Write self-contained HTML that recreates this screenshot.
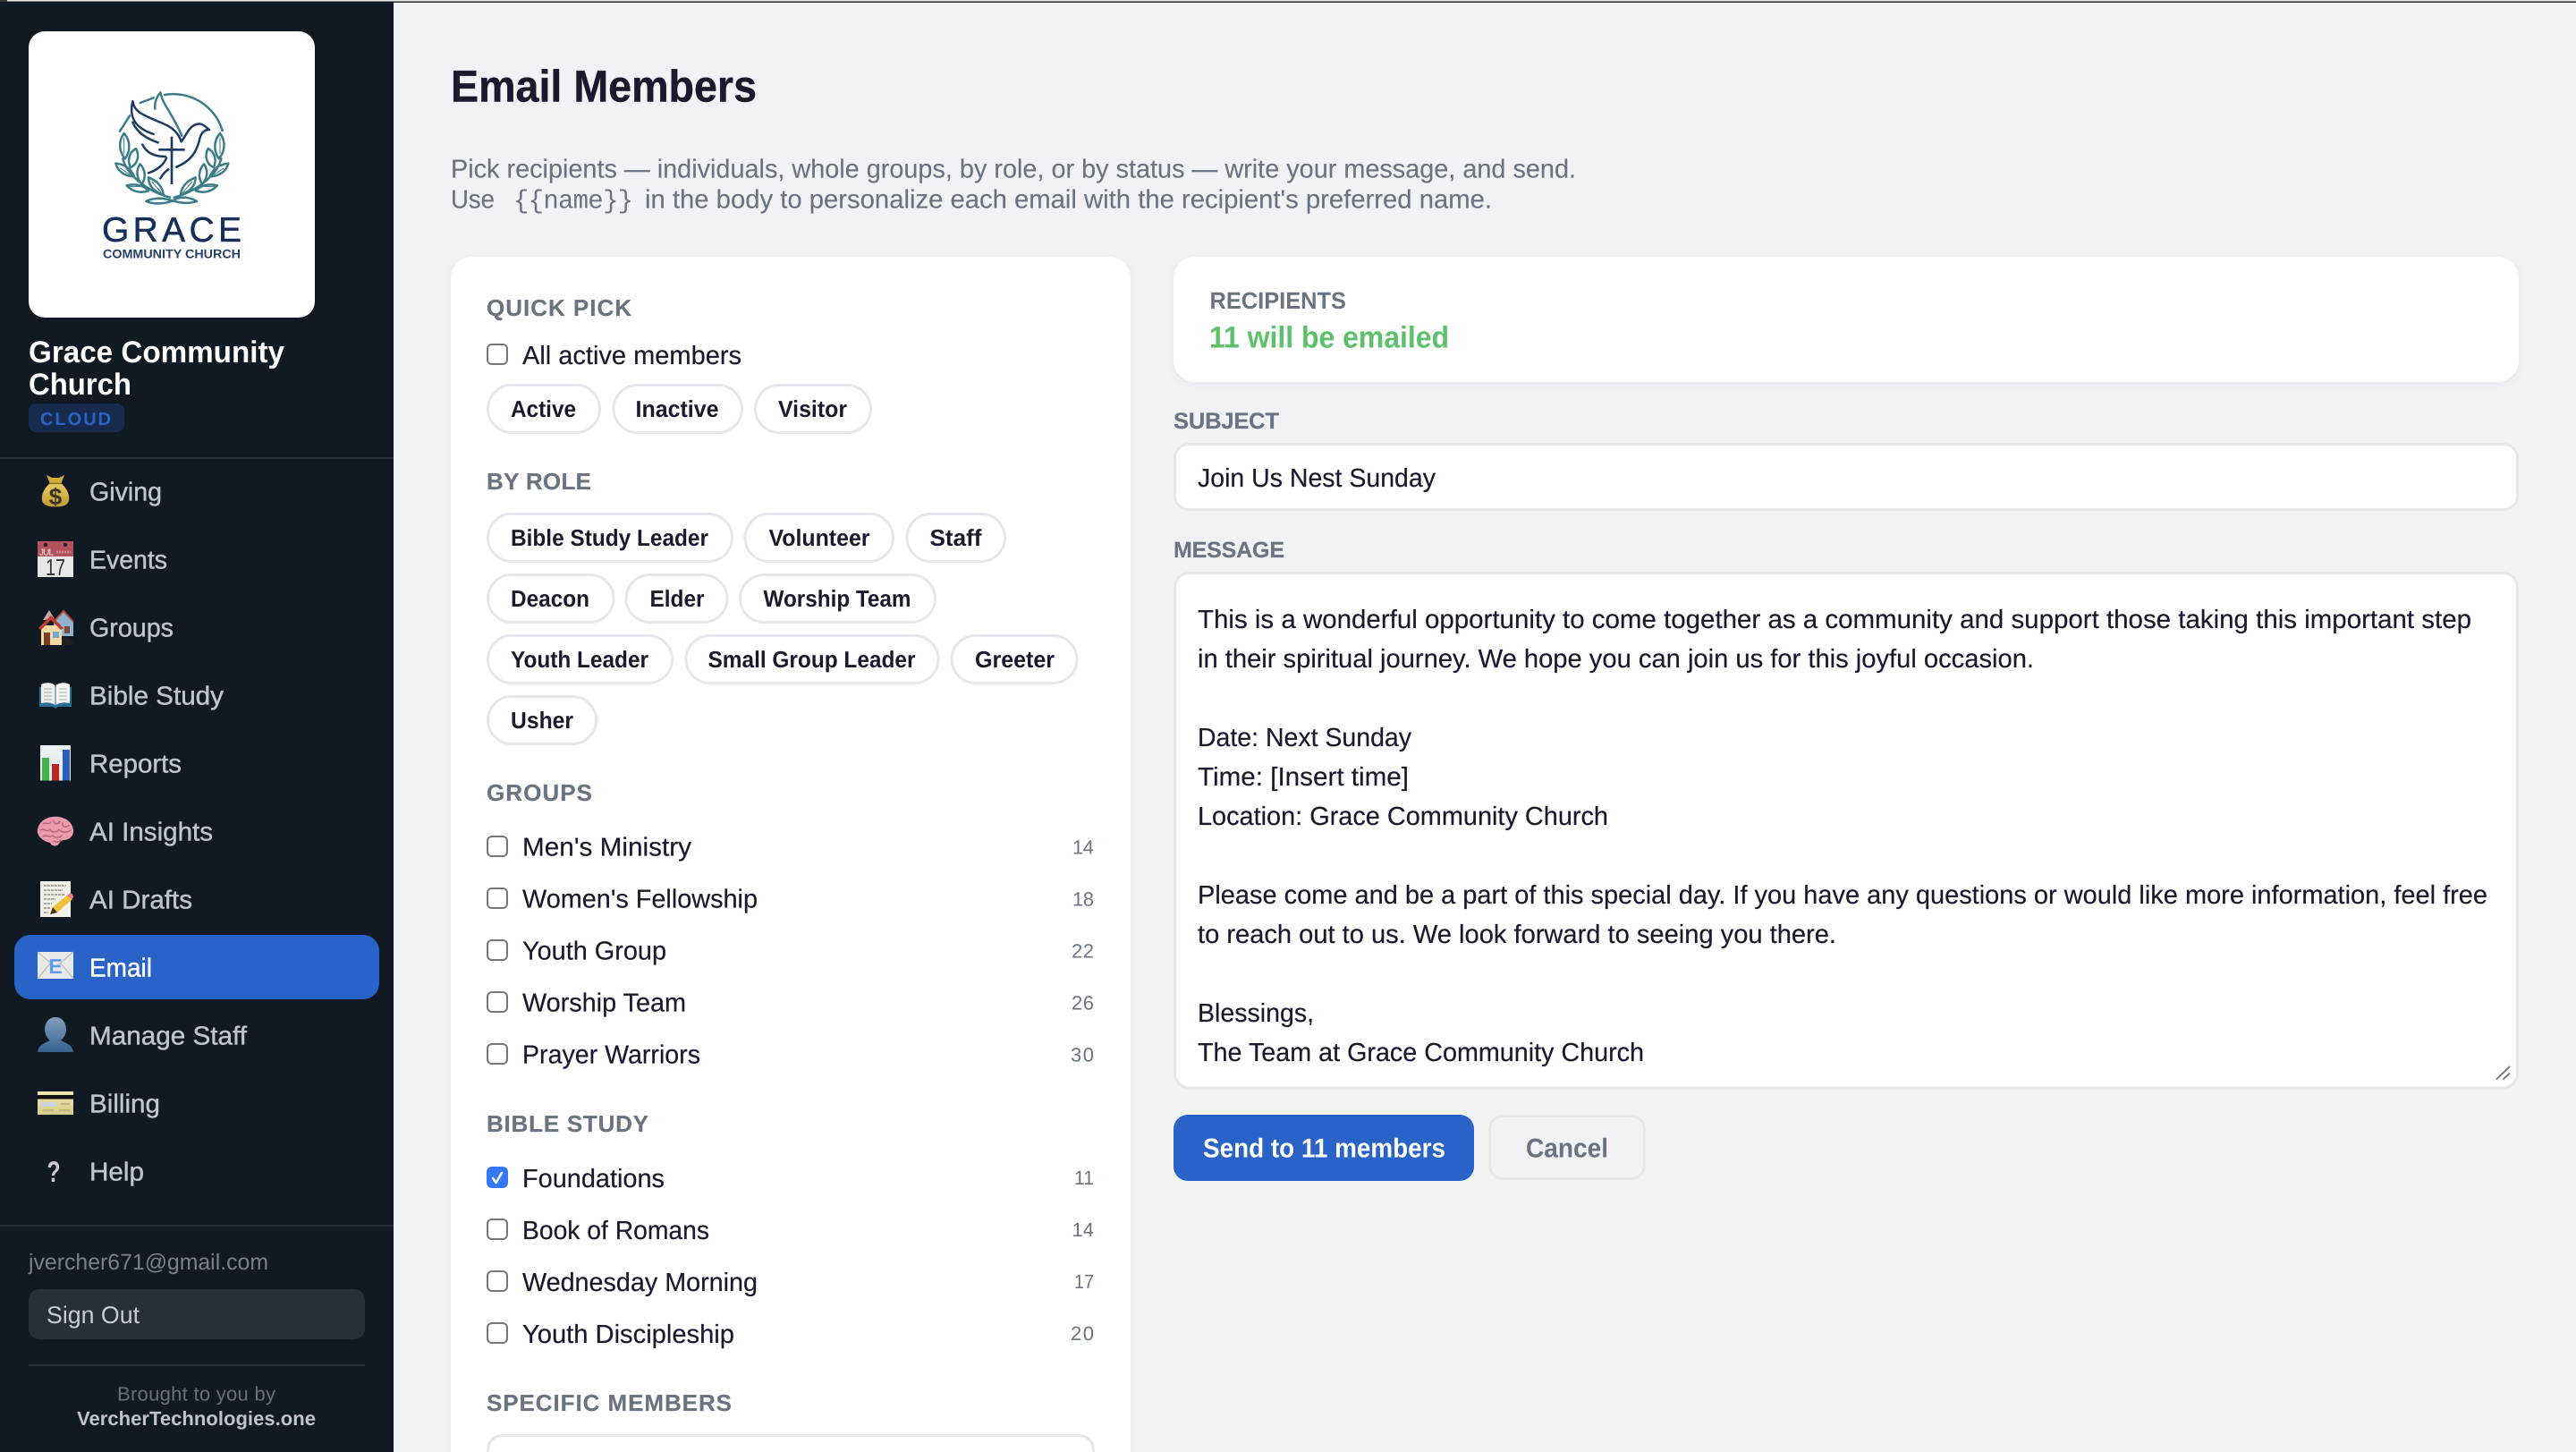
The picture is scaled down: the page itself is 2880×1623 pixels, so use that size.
<!DOCTYPE html>
<html lang="en"><head><meta charset="utf-8"><title>Email Members</title>
<style>
html,body{margin:0;padding:0;background:#f0f2f6;width:2880px;height:1623px;overflow:hidden}
svg{display:block}
text{font-family:"Liberation Sans",sans-serif;text-rendering:geometricPrecision}
.n{font-size:29px;fill:#c0c4cb;stroke:#c0c4cb;stroke-width:.4}
.h2{font-size:26px;font-weight:700;fill:#6b7280;stroke:#6b7280;stroke-width:.2}
.p{font-size:26px;font-weight:700;fill:#1a1a2e}
.b{font-size:29px;fill:#1a1a2e;stroke:#1a1a2e;stroke-width:.2}
.c{font-size:22px;fill:#6b7280}
.s{font-size:29px;fill:#6b7280;stroke:#6b7280;stroke-width:.15}
.pill{fill:#fff;stroke:#e5e7eb;stroke-width:3}
.cb{fill:#fff;stroke:#767676;stroke-width:2}
.card{fill:#fff;filter:drop-shadow(0 2px 5px rgba(0,0,0,.05))}
.inp{fill:#fff;stroke:#e5e7eb;stroke-width:3}
</style></head><body>
<svg xmlns="http://www.w3.org/2000/svg" width="2880" height="1623" viewBox="0 0 2880 1623">
<defs>
<linearGradient id="bag" x1="0" y1="0" x2="0" y2="1"><stop offset="0" stop-color="#eccb62"/><stop offset="1" stop-color="#c09a32"/></linearGradient>
<linearGradient id="bust" x1="0" y1="0" x2="0" y2="1"><stop offset="0" stop-color="#7f9fbd"/><stop offset="1" stop-color="#37638f"/></linearGradient>
<linearGradient id="crd" x1="0" y1="0" x2="0" y2="1"><stop offset="0" stop-color="#efe6b0"/><stop offset="1" stop-color="#d8cc8a"/></linearGradient>
<linearGradient id="chart" x1="0" y1="0" x2="0" y2="1"><stop offset="0" stop-color="#eef2f4"/><stop offset="1" stop-color="#dfe6ea"/></linearGradient>
</defs>
<rect width="2880" height="1623" fill="#f0f2f6"/>
<rect x="8" y="0" width="2872" height="1.5" fill="#e8e8e8"/>
<rect x="8" y="1.5" width="2872" height="1.5" fill="#23262c"/>

<!-- Sidebar -->
<rect x="0" y="0" width="440" height="1623" fill="#111a23"/>
<rect x="0" y="0" width="8" height="2" fill="#33363b"/>
<rect x="8" y="0" width="432" height="1.5" fill="#e8e8e8"/>
<rect x="32" y="35" width="320" height="320" rx="18" fill="#fff"/>

<!-- Logo -->
<g transform="translate(60 80) scale(.33333)" fill="none" stroke-linecap="round" stroke-linejoin="round">
 <g stroke="#3b7c89" stroke-width="7.5">
  <path d="M372 78A172 172 0 0 1 566 198M290 105L335 88M222 200L255 148"/>
  <g id="wr">
   <path d="M236 207C215 235 220 270 240 292C258 265 258 232 236 207Z"/>
   <path d="M276 258C255 270 245 295 258 322C280 310 290 285 276 258Z"/>
   <path d="M208 308C215 335 240 352 270 352C260 325 235 310 208 308Z"/>
   <path d="M290 310C275 330 278 360 296 378C310 355 308 330 290 310Z"/>
   <path d="M245 382C265 405 295 408 318 400C300 380 270 375 245 382Z"/>
   <path d="M318 355C318 385 340 405 368 412C365 385 345 365 318 355Z"/>
   <path d="M232 292C245 345 310 400 390 422"/>
   <path d="M236 222V275M225 325L255 345M305 385L255 386M330 370L360 405" stroke-width="3"/>
  </g>
  <use href="#wr" transform="translate(794 0) scale(-1 1)"/>
  <path d="M310 435C340 420 370 425 395 432C420 440 450 445 480 435C455 420 425 418 405 430C385 442 340 448 310 435Z"/>
  <path d="M358 70C345 85 338 105 340 125M358 70C365 110 395 135 430 215"/>
 </g>
 <g stroke="#1c3a63" stroke-width="7.5">
  <path d="M265 100C270 135 300 145 345 165C385 180 415 195 428 235"/>
  <path d="M265 100C255 140 260 185 335 210"/>
  <path d="M265 170C280 205 310 225 350 238"/>
  <path d="M298 245C310 270 335 285 375 285"/>
  <path d="M318 340C350 330 370 310 378 290"/>
  <path d="M358 358C365 345 375 335 385 328"/>
  <path d="M428 235C445 215 455 175 490 175C505 178 515 190 522 195C505 195 495 205 490 225C480 270 460 300 412 320"/>
  <path d="M396 218V378M352 262H440" stroke-linecap="butt" stroke-width="8"/>
 </g>
</g>
<text x="114" y="270" font-size="39" textLength="156" lengthAdjust="spacing" fill="#17305a" stroke="#17305a" stroke-width=".5">GRACE</text>
<text x="115" y="288.500" font-size="14" font-weight="700" textLength="154" lengthAdjust="spacingAndGlyphs" fill="#2a4066">COMMUNITY CHURCH</text>

<text x="32" y="405" font-size="34" font-weight="700" fill="#fff" textLength="286" lengthAdjust="spacingAndGlyphs">Grace Community</text>
<text x="32" y="441" font-size="34" font-weight="700" fill="#fff" textLength="115" lengthAdjust="spacingAndGlyphs">Church</text>
<rect x="32" y="451" width="107" height="32" rx="8" fill="#172c4d"/>
<text x="45" y="475" font-size="20" font-weight="700" fill="#2a62c6" textLength="79">CLOUD</text>
<rect x="0" y="511" width="440" height="2" fill="#252e39"/>

<!-- Nav -->
<rect x="16" y="1045" width="408" height="72" rx="18" fill="#2a63c7"/>
<text class="n" x="100" y="559.500" textLength="81" lengthAdjust="spacingAndGlyphs">Giving</text>
<text class="n" x="100" y="635.500" textLength="87" lengthAdjust="spacingAndGlyphs">Events</text>
<text class="n" x="100" y="711.500" textLength="94" lengthAdjust="spacingAndGlyphs">Groups</text>
<text class="n" x="100" y="787.500" textLength="150" lengthAdjust="spacingAndGlyphs">Bible Study</text>
<text class="n" x="100" y="863.500" textLength="103" lengthAdjust="spacingAndGlyphs">Reports</text>
<text class="n" x="100" y="939.500" textLength="138" lengthAdjust="spacingAndGlyphs">AI Insights</text>
<text class="n" x="100" y="1015.500" textLength="115" lengthAdjust="spacingAndGlyphs">AI Drafts</text>
<text class="n" x="100" y="1091.500" textLength="70" lengthAdjust="spacingAndGlyphs" style="fill:#fff;stroke:#fff">Email</text>
<text class="n" x="100" y="1167.500" textLength="176" lengthAdjust="spacingAndGlyphs">Manage Staff</text>
<text class="n" x="100" y="1243.500" textLength="79" lengthAdjust="spacingAndGlyphs">Billing</text>
<text class="n" x="100" y="1319.500" textLength="61" lengthAdjust="spacingAndGlyphs">Help</text>

<!-- money bag -->
<path d="M52 531L58 534H66L72 531L68 541H56Z" fill="#d2ab3c"/>
<path d="M56 540H68C75 546 78 553 77 559C76 565 70 566.500 62 566.500C54 566.500 48 565 47 559C46 553 49 546 56 540Z" fill="url(#bag)"/>
<path d="M55 540.500H69" stroke="#8c6d1e" stroke-width="1.500"/>
<text x="62" y="564" font-size="26" font-weight="700" fill="#3a3320" text-anchor="middle">$</text>
<!-- calendar -->
<rect x="42" y="605" width="40" height="40" fill="#e6e6e6"/>
<rect x="42" y="605" width="40" height="17" fill="#b4515c"/>
<circle cx="51" cy="609" r="2.200" fill="#222"/><circle cx="73" cy="609" r="2.200" fill="#222"/>
<text x="44" y="620.500" font-size="10" fill="#f3e6e6" textLength="16">JUL</text>
<path d="M63 617H79" stroke="#c98089" stroke-width="3" stroke-dasharray="2 1"/>
<text x="51" y="643" font-size="26" fill="#333" textLength="22" lengthAdjust="spacingAndGlyphs">17</text>
<!-- houses -->
<path d="M60 695L71 683L82 695V711H60Z" fill="#8fb4cf"/>
<path d="M60 695L71 683L82 695" fill="none" stroke="#b9473c" stroke-width="2"/>
<rect x="72" y="700" width="6" height="8" fill="#7a4a3a"/>
<path d="M66 721C68 712 76 708 82 720V721Z" fill="#1f1f1f"/>
<path d="M55 682L48 693L61 692Z" fill="#c9a9a4"/>
<rect x="46" y="699" width="23" height="22" fill="#f1d9a6"/>
<path d="M43 702L57 688L71 702L68 704L57 693L46 704Z" fill="#c23a2c"/>
<rect x="49" y="707" width="7" height="14" fill="#7a3d28"/>
<rect x="59" y="706" width="7" height="7" fill="#6fa8d8"/>
<!-- book -->
<path d="M44 768H80V790H65L62 792L59 790H44Z" fill="#2c6f96"/>
<path d="M46 765C52 762 58 763 61.500 766V788C57 785 52 785 46 786Z" fill="#eef0ee"/>
<path d="M78 765C72 762 66 763 62.500 766V788C67 785 72 785 78 786Z" fill="#f4f5f3"/>
<path d="M49 770H58M49 774H58M49 778H58M49 782H58M66 770H75M66 774H75M66 778H75M66 782H75" stroke="#a9adb0" stroke-width="1"/>
<!-- chart -->
<rect x="45" y="833" width="34" height="39.500" fill="url(#chart)"/>
<rect x="47" y="847" width="8" height="25.500" fill="#47b24a"/>
<rect x="58" y="854" width="8" height="18.500" fill="#b9271f"/>
<rect x="70" y="838" width="8" height="34.500" fill="#2a5cb8"/>
<!-- brain -->
<path d="M52 915C57 912 67 912 72 915C78 917 82 923 82 929C82 935 77 939 71 939C68 940 67 941 66 943C63 947 58 946 56 942C50 941 44 937 42 931C41 924 46 917 52 915Z" fill="#ec9bad"/>
<path d="M48 921C51 918 54 923 57 919M60 917C60 922 65 922 67 918M70 920C69 925 74 925 77 923M45 928C49 925 52 931 56 927C58 931 63 931 66 927C69 931 74 931 79 928M48 935C52 932 55 937 59 934C62 937 66 937 69 934M60 940C63 942 66 941 68 939" fill="none" stroke="#b9627a" stroke-width="1.400" stroke-linecap="round"/>
<!-- memo -->
<rect x="45" y="985" width="34" height="40" fill="#f1f0e8"/>
<path d="M49 990H74M49 995H70M49 1000H72M49 1005H62M49 1010H58M49 1015H56M49 1020H54" stroke="#77756e" stroke-width="1.300" stroke-dasharray="3 1"/>
<path d="M56 1022L59 1014L76 1000L81 1005L64 1020Z" fill="#f0c23a"/>
<path d="M75 1001L78 998.500C80 998 82 1000 82 1003L80 1005Z" fill="#e8788a"/>
<path d="M56 1022L59 1014L64 1020Z" fill="#3d3428"/>
<!-- envelope -->
<rect x="42" y="1064" width="40" height="30" fill="#e9e9e9"/>
<path d="M42 1064L62 1081L82 1064M42 1094L56 1077M82 1094L68 1077" fill="none" stroke="#bcbcbc" stroke-width="1.300"/>
<text x="62" y="1088" font-size="23" font-weight="700" fill="#5c9cf0" text-anchor="middle">E</text>
<!-- bust -->
<path d="M62 1137C70 1137 74 1144 74 1151C74 1156 71 1161 68 1163C74 1166 81 1168 82 1176H42C43 1168 50 1166 56 1163C53 1161 50 1156 50 1151C50 1144 54 1137 62 1137Z" fill="url(#bust)"/>
<!-- card -->
<rect x="42" y="1220" width="40" height="26" fill="url(#crd)"/>
<rect x="42" y="1224" width="40" height="4.500" fill="#111"/>
<rect x="45" y="1232" width="18" height="5" fill="#c9d2de"/>
<path d="M47 1241H60M66 1241H78M68 1234H78" stroke="#b3a86e" stroke-width="1.300"/>
<!-- help -->
<text x="52.500" y="1321" font-size="33" font-weight="700" fill="#c8cacf" textLength="15" lengthAdjust="spacingAndGlyphs">?</text>

<rect x="0" y="1369" width="440" height="2" fill="#252e39"/>
<text x="32" y="1419" font-size="25" fill="#7b8087" textLength="268" lengthAdjust="spacingAndGlyphs">jvercher671@gmail.com</text>
<rect x="32" y="1441" width="376" height="56" rx="12" fill="#292f39"/>
<text x="52" y="1479" font-size="27" fill="#c8ccd2" textLength="104" lengthAdjust="spacingAndGlyphs">Sign Out</text>
<rect x="32" y="1525" width="376" height="2" fill="#252d38"/>
<text x="131" y="1565.500" font-size="22" fill="#6a7078" textLength="177">Brought to you by</text>
<text x="86" y="1593" font-size="22" font-weight="700" fill="#c0c4ca" textLength="267">VercherTechnologies.one</text>

<!-- Header -->
<text x="504" y="113.500" font-size="50" font-weight="700" fill="#1a1a2e" stroke="#1a1a2e" stroke-width=".4" textLength="342" lengthAdjust="spacingAndGlyphs">Email Members</text>
<text class="s" x="504" y="198.500" textLength="1258" lengthAdjust="spacingAndGlyphs">Pick recipients — individuals, whole groups, by role, or by status — write your message, and send.</text>
<text class="s" x="504" y="232.500" textLength="49" lengthAdjust="spacingAndGlyphs">Use</text>
<text x="574" y="232.500" font-size="29" fill="#6b7280" style="font-family:'Liberation Mono',monospace" textLength="134">{{name}}</text>
<text class="s" x="721" y="232.500" textLength="947" lengthAdjust="spacingAndGlyphs">in the body to personalize each email with the recipient's preferred name.</text>

<!-- Left card -->
<path class="card" d="M504 1623V311A24 24 0 0 1 528 287H1240A24 24 0 0 1 1264 311V1623Z"/>
<text class="h2" x="544" y="353" textLength="162" lengthAdjust="spacing">QUICK PICK</text>
<rect class="cb" x="545" y="385" width="22" height="22" rx="5"/>
<text class="b" x="584" y="407" textLength="245" lengthAdjust="spacingAndGlyphs">All active members</text>

<rect class="pill" x="545.500" y="430.500" width="125" height="53" rx="26.500"/>
<text class="p" x="571" y="466" textLength="73" lengthAdjust="spacingAndGlyphs">Active</text>
<rect class="pill" x="686" y="430.500" width="143.500" height="53" rx="26.500"/>
<text class="p" x="710.500" y="466" textLength="93" lengthAdjust="spacingAndGlyphs">Inactive</text>
<rect class="pill" x="844.500" y="430.500" width="129" height="53" rx="26.500"/>
<text class="p" x="870" y="466" textLength="77" lengthAdjust="spacingAndGlyphs">Visitor</text>

<text class="h2" x="544" y="547" textLength="117" lengthAdjust="spacing">BY ROLE</text>
<rect class="pill" x="545.500" y="574.500" width="273" height="53" rx="26.500"/>
<text class="p" x="571" y="610" textLength="221" lengthAdjust="spacingAndGlyphs">Bible Study Leader</text>
<rect class="pill" x="833" y="574.500" width="165.500" height="53" rx="26.500"/>
<text class="p" x="859.500" y="610" textLength="113" lengthAdjust="spacingAndGlyphs">Volunteer</text>
<rect class="pill" x="1014" y="574.500" width="109.500" height="53" rx="26.500"/>
<text class="p" x="1039.500" y="610" textLength="58" lengthAdjust="spacingAndGlyphs">Staff</text>

<rect class="pill" x="545.500" y="642.500" width="140.500" height="53" rx="26.500"/>
<text class="p" x="571" y="678" textLength="88" lengthAdjust="spacingAndGlyphs">Deacon</text>
<rect class="pill" x="700" y="642.500" width="113" height="53" rx="26.500"/>
<text class="p" x="726.500" y="678" textLength="61" lengthAdjust="spacingAndGlyphs">Elder</text>
<rect class="pill" x="827.500" y="642.500" width="218" height="53" rx="26.500"/>
<text class="p" x="853.500" y="678" textLength="165" lengthAdjust="spacingAndGlyphs">Worship Team</text>

<rect class="pill" x="545.500" y="710.500" width="206" height="53" rx="26.500"/>
<text class="p" x="571" y="746" textLength="154" lengthAdjust="spacingAndGlyphs">Youth Leader</text>
<rect class="pill" x="767" y="710.500" width="282" height="53" rx="26.500"/>
<text class="p" x="791.500" y="746" textLength="232" lengthAdjust="spacingAndGlyphs">Small Group Leader</text>
<rect class="pill" x="1064" y="710.500" width="140" height="53" rx="26.500"/>
<text class="p" x="1090" y="746" textLength="89" lengthAdjust="spacingAndGlyphs">Greeter</text>

<rect class="pill" x="545.500" y="778.500" width="121" height="53" rx="26.500"/>
<text class="p" x="571" y="814" textLength="70" lengthAdjust="spacingAndGlyphs">Usher</text>

<text class="h2" x="544" y="895" textLength="118" lengthAdjust="spacing">GROUPS</text>
<rect class="cb" x="545" y="935" width="22" height="22" rx="5"/>
<text class="b" x="584" y="956.500" textLength="189" lengthAdjust="spacingAndGlyphs">Men's Ministry</text>
<text class="c" x="1199" y="954.500" textLength="24">14</text>
<rect class="cb" x="545" y="993" width="22" height="22" rx="5"/>
<text class="b" x="584" y="1014.500" textLength="263" lengthAdjust="spacingAndGlyphs">Women's Fellowship</text>
<text class="c" x="1199" y="1012.500" textLength="24">18</text>
<rect class="cb" x="545" y="1051" width="22" height="22" rx="5"/>
<text class="b" x="584" y="1072.500" textLength="161" lengthAdjust="spacingAndGlyphs">Youth Group</text>
<text class="c" x="1198" y="1070.500" textLength="25">22</text>
<rect class="cb" x="545" y="1109" width="22" height="22" rx="5"/>
<text class="b" x="584" y="1130.500" textLength="183" lengthAdjust="spacingAndGlyphs">Worship Team</text>
<text class="c" x="1198" y="1128.500" textLength="25">26</text>
<rect class="cb" x="545" y="1167" width="22" height="22" rx="5"/>
<text class="b" x="584" y="1188.500" textLength="199" lengthAdjust="spacingAndGlyphs">Prayer Warriors</text>
<text class="c" x="1197" y="1186.500" textLength="26">30</text>

<text class="h2" x="544" y="1265" textLength="181" lengthAdjust="spacing">BIBLE STUDY</text>
<rect x="544" y="1304" width="24" height="24" rx="6" fill="#3478f6"/>
<path d="M551 1317L554.500 1322L561 1311" fill="none" stroke="#fff" stroke-width="2.500" stroke-linecap="round" stroke-linejoin="round"/>
<text class="b" x="584" y="1327" textLength="159" lengthAdjust="spacingAndGlyphs">Foundations</text>
<text class="c" x="1201" y="1324" textLength="22" lengthAdjust="spacingAndGlyphs">11</text>
<rect class="cb" x="545" y="1363" width="22" height="22" rx="5"/>
<text class="b" x="584" y="1385" textLength="209" lengthAdjust="spacingAndGlyphs">Book of Romans</text>
<text class="c" x="1198.500" y="1382" textLength="24.500">14</text>
<rect class="cb" x="545" y="1421" width="22" height="22" rx="5"/>
<text class="b" x="584" y="1443" textLength="263" lengthAdjust="spacingAndGlyphs">Wednesday Morning</text>
<text class="c" x="1201" y="1440" textLength="22" lengthAdjust="spacingAndGlyphs">17</text>
<rect class="cb" x="545" y="1479" width="22" height="22" rx="5"/>
<text class="b" x="584" y="1501" textLength="237" lengthAdjust="spacingAndGlyphs">Youth Discipleship</text>
<text class="c" x="1197" y="1498" textLength="26">20</text>

<text class="h2" x="544" y="1577" textLength="274" lengthAdjust="spacing">SPECIFIC MEMBERS</text>
<path class="inp" d="M545.500 1623V1620.500A16 16 0 0 1 561.500 1604.500H1206.500A16 16 0 0 1 1222.500 1620.500V1623"/>

<!-- Right column -->
<rect class="card" x="1312" y="287" width="1504" height="140" rx="24"/>
<text x="1352.500" y="345" font-size="26.500" font-weight="700" fill="#6b7280" textLength="152.500" lengthAdjust="spacingAndGlyphs">RECIPIENTS</text>
<text x="1352" y="388.500" font-size="34" font-weight="700" fill="#5cc16a" textLength="268" lengthAdjust="spacingAndGlyphs">11 will be emailed</text>

<text class="h2" x="1312" y="479" textLength="118" lengthAdjust="spacing" style="font-size:25.500px">SUBJECT</text>
<rect class="inp" x="1313.500" y="496.500" width="1501" height="73" rx="15"/>
<text class="b" x="1339" y="544" textLength="266" lengthAdjust="spacingAndGlyphs">Join Us Nest Sunday</text>

<text class="h2" x="1312" y="623" textLength="124" lengthAdjust="spacing" style="font-size:25px">MESSAGE</text>
<rect class="inp" x="1313.500" y="640.500" width="1501" height="575.500" rx="16"/>
<text class="b" x="1339" y="702" textLength="1424" lengthAdjust="spacingAndGlyphs">This is a wonderful opportunity to come together as a community and support those taking this important step</text>
<text class="b" x="1339" y="746" textLength="935" lengthAdjust="spacingAndGlyphs">in their spiritual journey. We hope you can join us for this joyful occasion.</text>
<text class="b" x="1339" y="834" textLength="239" lengthAdjust="spacingAndGlyphs">Date: Next Sunday</text>
<text class="b" x="1339" y="878" textLength="236" lengthAdjust="spacingAndGlyphs">Time: [Insert time]</text>
<text class="b" x="1339" y="922" textLength="459" lengthAdjust="spacingAndGlyphs">Location: Grace Community Church</text>
<text class="b" x="1339" y="1010" textLength="1442" lengthAdjust="spacingAndGlyphs">Please come and be a part of this special day. If you have any questions or would like more information, feel free</text>
<text class="b" x="1339" y="1054" textLength="714" lengthAdjust="spacingAndGlyphs">to reach out to us. We look forward to seeing you there.</text>
<text class="b" x="1339" y="1142" textLength="130" lengthAdjust="spacingAndGlyphs">Blessings,</text>
<text class="b" x="1339" y="1186" textLength="499" lengthAdjust="spacingAndGlyphs">The Team at Grace Community Church</text>
<path d="M2791 1206.500L2806 1192M2798.500 1206.500L2806 1199.500" stroke="#7a7a7a" stroke-width="2" fill="none"/>

<rect x="1312" y="1246" width="336" height="74" rx="16" fill="#2a63c7"/>
<text x="1345" y="1293.500" font-size="30" font-weight="700" fill="#fff" textLength="271" lengthAdjust="spacingAndGlyphs">Send to 11 members</text>
<rect x="1665.500" y="1247.500" width="173" height="70" rx="15" fill="#f0f2f6" stroke="#e5e7eb" stroke-width="3"/>
<text x="1706" y="1293.500" font-size="30" font-weight="700" fill="#6b7280" textLength="92" lengthAdjust="spacingAndGlyphs">Cancel</text>
</svg>
</body></html>
